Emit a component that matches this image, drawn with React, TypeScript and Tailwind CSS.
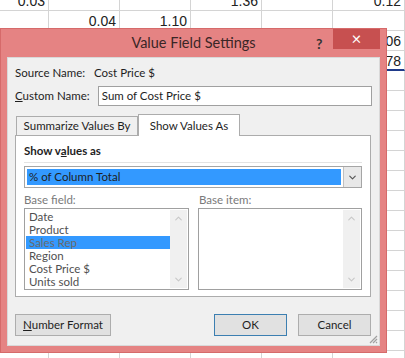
import { ChevronDown, ChevronUp } from 'lucide-react';

const cols = [49, 71, 71, 71, 71, 72];

const rows: (string | null)[][] = [
  ['0.03', null, null, '1.36', null, '0.12'],
  [null, '0.04', '1.10', null, null, null],
  [null, null, null, null, null, '1.06'],
  [null, null, null, null, null, '0.78'],
  ...Array.from({ length: 15 }, () => [null, null, null, null, null, null]),
];

const baseFields = ['Date', 'Product', 'Sales Rep', 'Region', 'Cost Price $', 'Units sold'];

const Sheet = () => (
  <div className="-mt-[9px] font-['Liberation_Sans',sans-serif] text-[14px] text-[#222]">
    {rows.map((row, r) => (
      <div key={r} className="flex h-[20px]">
        {row.map((v, c) => (
          <div
            key={c}
            style={{ width: cols[c] }}
            className={`shrink-0 border-r border-b border-[#d4d4d4] pr-[3px] text-right leading-[20px] ${
              r === 3 && c === 5 ? 'border-b-2 border-b-[#1f3a8a]' : ''
            }`}
          >
            {v}
          </div>
        ))}
      </div>
    ))}
  </div>
);

const ScrollBar = () => (
  <div className="flex w-[17px] flex-col items-center justify-between bg-[#f0f0f0] py-[3px] text-[#c8c8c8]">
    <ChevronUp className="h-[11px] w-[11px]" strokeWidth={2.5} />
    <ChevronDown className="h-[11px] w-[11px]" strokeWidth={2.5} />
  </div>
);

const Dialog = () => (
  <div className="absolute left-0 top-[28px] flex h-[325px] w-[387px] flex-col whitespace-nowrap border border-[#d66a6a] bg-[#e58383] font-['Lato',sans-serif] text-[11.5px] text-[#1e1e1e]">
    {/* title bar */}
    <div className="relative flex h-[28px] items-center justify-center">
      <span className="text-[14.5px] text-[#3a2626]">Value Field Settings</span>
      <span className="absolute left-[315px] top-[4px] text-[14px] font-bold text-[#333]">?</span>
      <div className="absolute right-[6px] top-0 flex h-[20px] w-[47px] items-center justify-center bg-[#c75050] text-[17px] text-white">
        ×
      </div>
    </div>

    {/* client area */}
    <div className="relative mx-[6px] mb-[6px] flex flex-1 flex-col border border-[#d9d9d9] bg-[#f0f0f0] px-[7px] pt-[7px]">
      <div className="flex h-[16px] items-center">
        <span className="w-[79px]">Source Name:</span>
        <span>Cost Price $</span>
      </div>
      <div className="mt-[5px] flex h-[20px] items-center">
        <span className="w-[83px]">
          <span className="underline">C</span>ustom Name:
        </span>
        <div className="flex h-[20px] w-[275px] items-center border border-[#a0a0a0] bg-white px-[3px]">
          Sum of Cost Price $
        </div>
      </div>

      {/* tabs */}
      <div className="mt-[8px] flex items-end pl-[1px]">
        <div className="flex h-[19px] w-[122px] items-center justify-center border border-b-0 border-[#acacac] bg-[#f0f0f0]">
          Summarize Values By
        </div>
        <div className="-mb-px z-10 flex h-[22px] w-[102px] items-center justify-center border border-b-0 border-[#acacac] bg-white">
          Show Values As
        </div>
      </div>
      <div className="flex h-[162px] w-[356px] flex-col border border-[#acacac] bg-white px-[8px] pt-[7px]">
        <div className="flex h-[15px] items-center font-bold">
          Show v<span className="underline">a</span>lues as
        </div>
        <div className="mt-[4px] h-px bg-[#e3e3e3]" />
        <div className="mt-[3px] flex h-[22px] border border-[#a5a5a5] bg-white p-[2px]">
          <div className="flex flex-1 items-center bg-[#3399ff] px-[2px] text-[#1e1e1e]">% of Column Total</div>
          <div className="-my-[2px] -mr-[2px] ml-[2px] flex w-[18px] items-center justify-center border-l border-[#c0c0c0] bg-[#e8e8e8] text-[#555]">
            <ChevronDown className="h-[11px] w-[11px]" strokeWidth={2.5} />
          </div>
        </div>
        <div className="mt-[6px] flex h-[12px] items-center gap-[9px] leading-[12px] text-[#7a7a7a]">
          <span className="w-[166px]">Base field:</span>
          <span>Base item:</span>
        </div>
        <div className="mt-[2px] flex gap-[9px]">
          <div className="flex h-[82px] w-[166px] border border-[#a0a0a0] bg-white p-px">
            <div className="flex flex-1 flex-col text-[#505050]">
              {baseFields.map((f) => (
                <div
                  key={f}
                  className={`h-[13px] pl-[3px] leading-[13px] ${f === 'Sales Rep' ? 'bg-[#3399ff] text-[#6a6a6a]' : ''}`}
                >
                  {f}
                </div>
              ))}
            </div>
            <ScrollBar />
          </div>
          <div className="flex h-[82px] w-[165px] justify-end border border-[#a0a0a0] bg-white p-px">
            <ScrollBar />
          </div>
        </div>
      </div>

      {/* buttons */}
      <div className="mt-[17px] flex">
        <div className="flex h-[22px] w-[96px] items-center justify-center border border-[#adadad] bg-[#e1e1e1]">
          <span>
            <span className="underline">N</span>umber Format
          </span>
        </div>
        <div className="ml-auto flex h-[22px] w-[73px] items-center justify-center border border-[#3c7fb1] bg-[#e1e1e1]">
          OK
        </div>
        <div className="ml-[11px] mr-[1px] flex h-[22px] w-[73px] items-center justify-center border border-[#adadad] bg-[#e1e1e1]">
          Cancel
        </div>
      </div>

      {/* resize grip */}
      <svg className="absolute bottom-[1px] right-[1px]" width="9" height="9" viewBox="0 0 9 9">
        <path d="M8 1L1 8M8 4L4 8M8 7L7 8" stroke="#a0a0a0" strokeWidth="1.2" />
      </svg>
    </div>
  </div>
);

export default function App() {
  return (
    <div className="relative h-[358px] w-[405px] overflow-hidden bg-white">
      <Sheet />
      <Dialog />
    </div>
  );
}
